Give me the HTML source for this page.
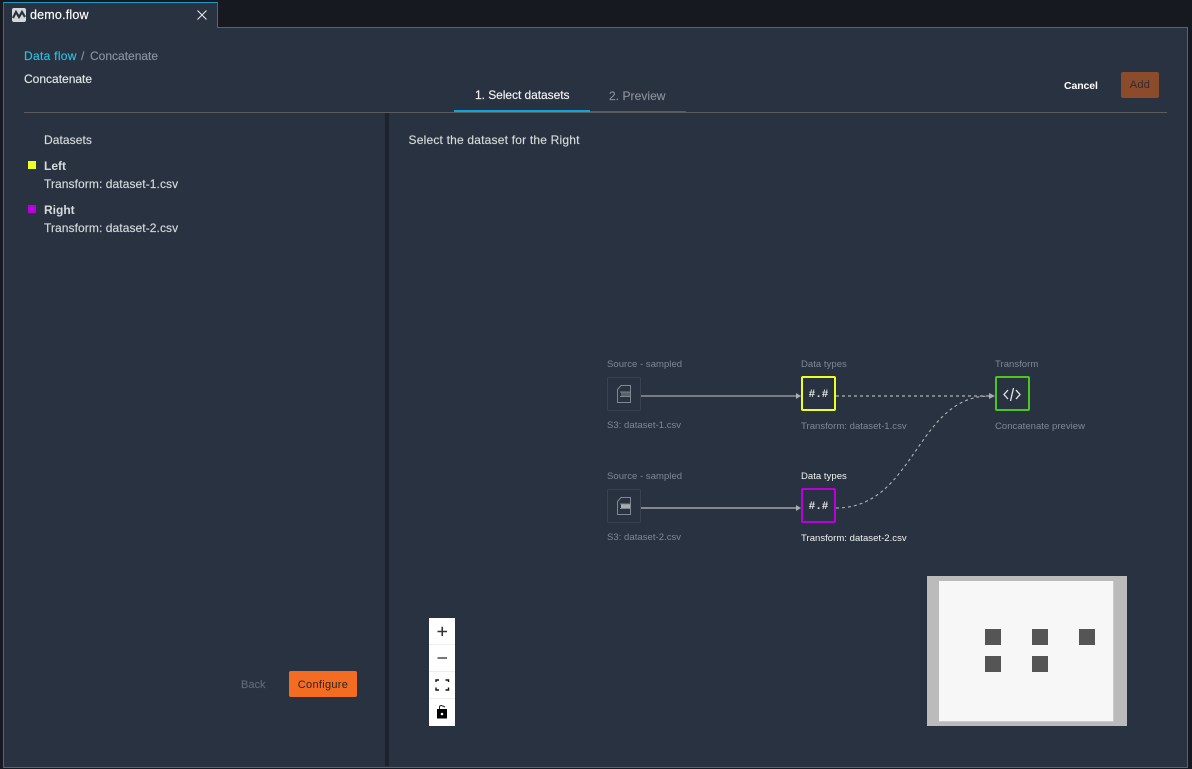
<!DOCTYPE html>
<html><head><meta charset="utf-8"><style>
html,body{margin:0;padding:0;width:1192px;height:769px;overflow:hidden;background:#16191f;font-family:"Liberation Sans",sans-serif;}
div,span{position:absolute;white-space:nowrap;}
.t{font-size:12px;line-height:14px;color:#d5dbdb;letter-spacing:.08px;-webkit-text-stroke:.15px currentColor;}
.s{font-size:9.500px;line-height:12px;color:#7d8998;letter-spacing:.04px;}
svg{position:absolute;left:0;top:0;}
</style></head><body>
<div style="left:3px;top:27px;width:1183px;height:739px;background:#293241;border:1px solid #5f6368;"></div>
<div style="left:3px;top:2px;width:215px;height:26px;background:#293241;border-right:1px solid #5f6368;box-sizing:border-box;border-left:1px solid #5f6368;border-top:1px solid #1f9ac6;"></div>
<div class="t" style="left:30px;top:8px;color:#fff;font-size:12.500px;letter-spacing:.2px;">demo.flow</div>
<div class="t" style="left:24px;top:49px;color:#2bc0e0;letter-spacing:.3px;">Data flow</div>
<div class="t" style="left:81px;top:49px;color:#8a939f;">/</div>
<div class="t" style="left:90px;top:49px;color:#8a939f;letter-spacing:0;">Concatenate</div>
<div class="t" style="left:24px;top:72px;color:#e4e7e9;letter-spacing:0;">Concatenate</div>
<div class="t" style="left:475px;top:88px;color:#f2f3f3;letter-spacing:-.05px;">1. Select datasets</div>
<div class="t" style="left:609px;top:89px;color:#8a8f98;letter-spacing:.05px;">2. Preview</div>
<div style="left:24px;top:112px;width:1143px;height:1px;background:#5c5d5f;"></div>
<div style="left:590px;top:111px;width:96px;height:1px;background:#5c5d5f;"></div>
<div style="left:454px;top:110px;width:136px;height:2px;background:#0ea5dc;"></div>
<div class="t" style="left:1064px;top:79px;color:#fff;font-weight:bold;font-size:10.500px;letter-spacing:-.1px;-webkit-text-stroke:0;">Cancel</div>
<div style="left:1121px;top:72px;width:38px;height:26px;background:#8c4c2b;border-radius:2px;text-align:center;font-size:11px;line-height:27px;color:#2f2b30;letter-spacing:.3px;position:absolute;">Add</div>
<div style="left:385px;top:113px;width:4px;height:653px;background:#1d232c;"></div>
<div class="t" style="left:44px;top:133px;">Datasets</div>
<div style="left:28px;top:161px;width:8px;height:8px;background:#eeff22;"></div>
<div class="t" style="left:44px;top:159px;font-weight:bold;letter-spacing:0;-webkit-text-stroke:0;">Left</div>
<div class="t" style="left:44px;top:177px;">Transform: dataset-1.csv</div>
<div style="left:28px;top:205px;width:8px;height:8px;background:#bb00dd;"></div>
<div class="t" style="left:44px;top:203px;font-weight:bold;letter-spacing:0;-webkit-text-stroke:0;">Right</div>
<div class="t" style="left:44px;top:221px;">Transform: dataset-2.csv</div>
<div class="t" style="left:241px;top:678px;color:#5f6875;font-size:11px;letter-spacing:0;">Back</div>
<div style="left:289px;top:671px;width:68px;height:26px;background:#f36c21;border-radius:2px;text-align:center;font-size:11px;line-height:28px;color:#2b2422;letter-spacing:.3px;">Configure</div>
<div class="t" style="left:408.500px;top:133px;letter-spacing:.2px;">Select the dataset for the Right</div>

<div class="s" style="left:607px;top:359px;">Source - sampled</div>
<div class="s" style="left:607px;top:420px;">S3: dataset-1.csv</div>
<div class="s" style="left:801px;top:359px;">Data types</div>
<div class="s" style="left:801px;top:421px;">Transform: dataset-1.csv</div>
<div class="s" style="left:995px;top:359px;">Transform</div>
<div class="s" style="left:995px;top:421px;">Concatenate preview</div>
<div class="s" style="left:607px;top:471px;">Source - sampled</div>
<div class="s" style="left:607px;top:532px;">S3: dataset-2.csv</div>
<div class="s" style="left:801px;top:471px;color:#f2f3f3;">Data types</div>
<div class="s" style="left:801px;top:533px;color:#f2f3f3;">Transform: dataset-2.csv</div>

<div style="left:607px;top:377px;width:32px;height:32px;border:1px solid #3a424f;border-radius:2px;"></div>
<div style="left:607px;top:489px;width:32px;height:32px;border:1px solid #3a424f;border-radius:2px;"></div>
<div style="left:801px;top:376px;width:31px;height:31px;border:2px solid #eeff22;border-radius:2px;"></div>
<div style="left:801px;top:488px;width:31px;height:31px;border:2px solid #bb00dd;border-radius:2px;"></div>
<div style="left:995px;top:376px;width:31px;height:31px;border:2px solid #4fc520;border-radius:2px;"></div>
<div style="left:800.500px;top:388px;width:36px;text-align:center;font-family:'Liberation Mono',monospace;font-size:11px;line-height:14px;color:#e4e7e9;font-weight:bold;letter-spacing:0;">#.#</div>
<div style="left:800.500px;top:500px;width:36px;text-align:center;font-family:'Liberation Mono',monospace;font-size:11px;line-height:14px;color:#e4e7e9;font-weight:bold;letter-spacing:0;">#.#</div>

<svg width="1192" height="769" viewBox="0 0 1192 769" fill="none">
<!-- tab icon -->
<rect x="12" y="8" width="14" height="14" rx="2" fill="#d5d8da"/>
<path d="M13 18 L16 12 L19 17 L22 12 L25 17" stroke="#293241" stroke-width="2.200"/>
<path d="M197.500 10.500 L206.500 19.500 M206.500 10.500 L197.500 19.500" stroke="#e4e7e9" stroke-width="1.100"/>
<!-- file icons -->
<g stroke="#7f8792" stroke-width="1">
<path d="M621 385.500 H630.500 V402.500 H617.500 V389.500 Z"/>
<path d="M620 392 H630 M620 396.500 H630"/>
<rect x="621" y="392.500" width="9" height="3.500" fill="#59616d" stroke="none"/>
<path d="M621 497.500 H630.500 V514.500 H617.500 V501.500 Z"/>
<path d="M620 504 H630 M620 508.500 H630"/>
<rect x="621" y="504.500" width="9" height="3.500" fill="#a8adb3" stroke="none"/>
</g>
<!-- edges -->
<path d="M641 396 H797" stroke="#a3a8ad" stroke-width="1.200"/>
<path d="M641 508 H797" stroke="#b9bdc1" stroke-width="1.200"/>
<path d="M796 393 L801 396 L796 399 Z M796 505 L801 508 L796 511 Z M989 393 L995 396 L989 399 Z" fill="#a9adb2"/>
<path d="M836 396 H990" stroke="#b0b4b8" stroke-width="1.200" stroke-dasharray="3 3"/>
<path d="M836 508 C915 508 916 396 990 396" stroke="#b0b4b8" stroke-width="1.100" stroke-dasharray="3 3"/>
<!-- code icon -->
<path d="M1008 390 L1004 394.500 L1008 399 M1016 390 L1020 394.500 L1016 399 M1013.500 388 L1010.500 401" stroke="#e4e7e9" stroke-width="1.300"/>
</svg>

<!-- controls -->
<div style="left:429px;top:618px;width:26px;height:108px;background:#fff;"></div>
<div style="left:429px;top:644px;width:26px;height:1px;background:#eee;"></div>
<div style="left:429px;top:671px;width:26px;height:1px;background:#eee;"></div>
<div style="left:429px;top:698px;width:26px;height:1px;background:#eee;"></div>
<svg width="1192" height="769" viewBox="0 0 1192 769" fill="none">
<path d="M437.500 631.500 H447 M442.250 626.750 V636" stroke="#333" stroke-width="1.600"/>
<path d="M437.500 658 H447" stroke="#555" stroke-width="1.600"/>
<path d="M436 682 V680 H439 M445.500 680 H448.500 V682 M448.500 687.500 V690 H445.500 M439 690 H436 V687.500" stroke="#111" stroke-width="1.400"/>
<rect x="437" y="709" width="10" height="9.500" fill="#000"/>
<path d="M439.500 709 V707 Q439.500 705.500 441.500 705.500 L445 707" stroke="#222" stroke-width="1"/>
<circle cx="442" cy="714" r="1.300" fill="#fff"/>
</svg>

<!-- minimap -->
<div style="left:927px;top:576px;width:200px;height:150px;background:#bbb;"></div>
<div style="left:939px;top:581px;width:174px;height:140px;background:#f7f7f7;border-right:1px solid #ccc;border-bottom:1px solid #ccc;"></div>
<div style="left:985px;top:629px;width:16px;height:16px;background:#555;"></div>
<div style="left:1032px;top:629px;width:16px;height:16px;background:#555;"></div>
<div style="left:1079px;top:629px;width:16px;height:16px;background:#555;"></div>
<div style="left:985px;top:656px;width:16px;height:16px;background:#555;"></div>
<div style="left:1032px;top:656px;width:16px;height:16px;background:#555;"></div>
</body></html>
